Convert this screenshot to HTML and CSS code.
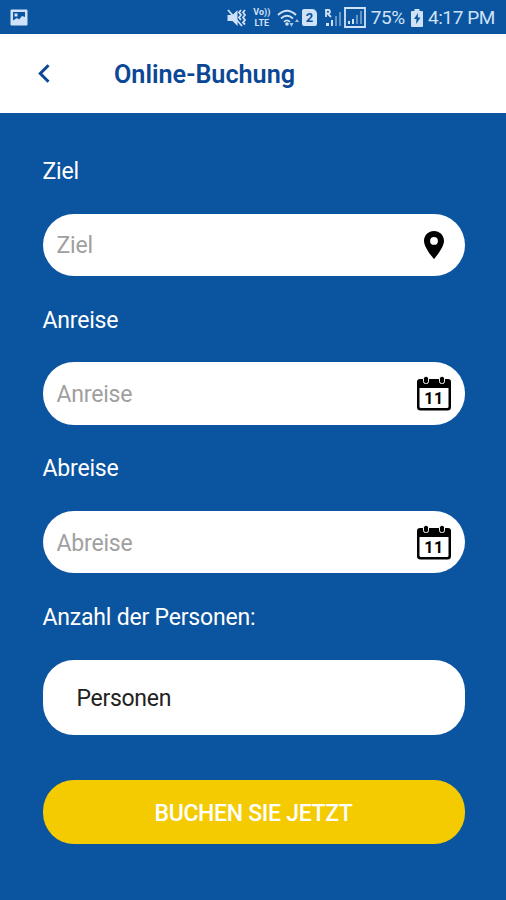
FILE: index.html
```
<!DOCTYPE html>
<html lang="de">
<head>
  <meta charset="UTF-8" />
  <meta name="viewport" content="width=device-width, initial-scale=1.0" />
  <title>Online-Buchung</title>
  <link rel="stylesheet" href="styles.css">
</head>
<body>

  <!-- Statusleiste -->
  <div class="status-bar">
    <svg class="icon-picture" width="18" height="17" viewBox="0 0 18 17" aria-hidden="true">
      <path fill-rule="evenodd" d="M1.500 0.500h15q1 0 1 1v14q0 1-1 1h-15q-1 0-1-1v-14q0-1 1-1zM3 3v8.500l4-2.500 2 1.500 3-3.500 3 1V3zM4.500 4.500h3v3h-3z"/>
    </svg>
    <div class="status-right">
      <svg class="icon-mute" width="20" height="18" viewBox="0 0 20 18" aria-hidden="true">
        <path d="M0.500 6h5l5-5v16l-5-5h-5z"/>
        <path class="line" d="M1 1l14 16M14 1l-2 2.500 2 2.500-2 2.500 2 2.500M18 1l-2 2.500 2 2.500-2 2.500 2 2.500-2 2.500 2 2"/>
      </svg>
      <div class="volte"><span>Vo))</span><span>LTE</span></div>
      <svg class="icon-wifi" width="22" height="18" viewBox="0 0 22 18" aria-hidden="true">
        <path class="line" d="M1 6q9-8.500 18 0M4 9.500q6-5.500 12 0M7 12.800q3-3 6 0"/>
        <circle cx="10" cy="15" r="1.800"/>
        <path d="M12.500 14h4l-2 4zM18 13l2-3 2 3z" opacity="0.8"/>
      </svg>
      <div class="sim">2</div>
      <svg class="icon-signal" width="18" height="20" viewBox="0 0 18 20" aria-hidden="true">
        <path class="line" d="M2 9V2h3q2 1.500 0 3.500H2M4 6l3 3"/>
        <path d="M2 15h3v3H2zM7 12h2v6H7z"/>
        <path d="M11 8h2v10h-2zM15 4h2v14h-2z" opacity="0.45"/>
      </svg>
      <svg class="icon-signal-box" width="22" height="21" viewBox="0 0 22 21" aria-hidden="true">
        <path class="line" d="M1 1h20v19H1z"/>
        <path d="M4 14h2v3H4zM8 12h2v5H8z"/>
        <path d="M12 8h2v9h-2zM16 4h2v13h-2z" opacity="0.45"/>
      </svg>
      <span class="percent">75%</span>
      <svg class="icon-battery" width="12" height="18" viewBox="0 0 12 18" aria-hidden="true">
        <path fill-rule="evenodd" d="M3.500 0h5v2H11q1 0 1 1v14q0 1-1 1H1q-1 0-1-1V3q0-1 1-1h2.500zM7 4L3 10h2.500L5 15l4.500-6.500H6.800z"/>
      </svg>
      <span class="time">4:17 PM</span>
    </div>
  </div>

  <!-- Kopfzeile -->
  <header class="header">
    <a class="back" href="#" aria-label="Zurück">
      <svg width="12" height="19" viewBox="0 0 12 19" aria-hidden="true">
        <path d="M10.500 1.200L2.300 9.500l8.200 8.300"/>
      </svg>
    </a>
    <h1>Online-Buchung</h1>
  </header>

  <!-- Buchungsformular -->
  <form class="booking">
    <label for="ziel">Ziel</label>
    <div class="field">
      <input type="text" id="ziel" placeholder="Ziel">
      <svg class="icon-pin" width="20" height="28" viewBox="0 0 20 28" aria-hidden="true">
        <path fill-rule="evenodd" d="M10 0C4.400 0 0 4.300 0 9.800 0 17 10 28 10 28s10-11 10-18.200C20 4.300 15.600 0 10 0zm0 6a3.900 3.900 0 1 1 0 7.800A3.900 3.900 0 0 1 10 6z"/>
      </svg>
    </div>

    <label for="anreise">Anreise</label>
    <div class="field">
      <input type="text" id="anreise" placeholder="Anreise">
      <svg class="icon-calendar" width="34" height="35" viewBox="0 0 34 35" aria-hidden="true">
        <path d="M3 3h28q3 0 3 3v25q0 3.500-3.500 3.500h-27Q0 34.500 0 31V6q0-3 3-3z"/>
        <path class="paper" d="M2.500 12h29v18.500q0 1.500-1.500 1.500H4q-1.500 0-1.500-1.500z"/>
        <rect class="ring" x="6.500" y="0.500" width="5" height="7" rx="2"/>
        <rect class="ring" x="22.500" y="0.500" width="5" height="7" rx="2"/>
        <text x="17" y="27.500">11</text>
      </svg>
    </div>

    <label for="abreise">Abreise</label>
    <div class="field">
      <input type="text" id="abreise" placeholder="Abreise">
      <svg class="icon-calendar" width="34" height="35" viewBox="0 0 34 35" aria-hidden="true">
        <path d="M3 3h28q3 0 3 3v25q0 3.500-3.500 3.500h-27Q0 34.500 0 31V6q0-3 3-3z"/>
        <path class="paper" d="M2.500 12h29v18.500q0 1.500-1.500 1.500H4q-1.500 0-1.500-1.500z"/>
        <rect class="ring" x="6.500" y="0.500" width="5" height="7" rx="2"/>
        <rect class="ring" x="22.500" y="0.500" width="5" height="7" rx="2"/>
        <text x="17" y="27.500">11</text>
      </svg>
    </div>

    <label for="personen">Anzahl der Personen:</label>
    <button type="button" class="persons" id="personen">Personen</button>

    <button type="submit" class="submit-btn">BUCHEN SIE JETZT</button>
  </form>

</body>
</html>
```
FILE: styles.css
```
* {
  box-sizing: border-box;
}

body {
  font-family: Roboto, "Liberation Sans", sans-serif;
  margin: 0;
  background: #0b549f;
  color: #fff;
  min-height: 100vh;
}

/* Statusleiste */
.status-bar {
  display: flex;
  justify-content: space-between;
  align-items: center;
  height: 34px;
  padding: 1px 11px 0 10px;
  color: #cfe2f7;
}

.status-bar svg {
  fill: #cfe2f7;
  flex: none;
}

.status-bar .line {
  fill: none;
  stroke: #cfe2f7;
  stroke-width: 1.8;
}

.status-right {
  display: flex;
  align-items: center;
  font-size: 19px;
  letter-spacing: -0.4px;
  line-height: 22px;
  white-space: nowrap;
}

.volte {
  display: flex;
  flex-direction: column;
  width: 18px;
  margin-left: 6px;
  font-size: 9px;
  font-weight: 700;
  letter-spacing: 0;
  line-height: 11px;
  text-align: center;
}

.icon-wifi {
  margin-left: 6px;
}

.sim {
  width: 15px;
  height: 17px;
  margin-left: 3px;
  border-radius: 2px;
  border-top-right-radius: 5px;
  background: #cfe2f7;
  color: #0b549f;
  font-size: 13px;
  font-weight: 700;
  line-height: 17px;
  text-align: center;
}

.icon-signal {
  margin-left: 7px;
}

.icon-signal-box {
  margin-left: 2px;
}

.percent {
  margin-left: 5px;
}

.icon-battery {
  margin-left: 6px;
}

.time {
  margin-left: 5px;
}

/* Kopfzeile */
.header {
  display: flex;
  align-items: center;
  height: 79px;
  padding: 2px 38px 0;
  background: #fff;
  color: #0b4795;
}

.back {
  display: flex;
  width: 76px;
  padding-bottom: 3px;
}

.back svg {
  fill: none;
  stroke: #0b4795;
  stroke-width: 3;
}

.header h1 {
  margin: 0;
  font-size: 25.200px;
  font-weight: 600;
  line-height: 30px;
}

/* Formular */
.booking {
  display: flex;
  flex-direction: column;
  padding: 44px 41.500px 0 42.500px;
}

.booking label {
  height: 30px;
  margin-bottom: 26.500px;
  font-size: 23px;
  letter-spacing: -0.2px;
  line-height: 30px;
}

.field {
  display: flex;
  align-items: center;
  height: 62.500px;
  margin-bottom: 29.700px;
  padding: 0 14px;
  border-radius: 31px;
  background: #fff;
}

.field input {
  flex: 1;
  min-width: 0;
  padding: 2px 0 0;
  border: none;
  outline: none;
  background: transparent;
  font-family: inherit;
  font-size: 23px;
  letter-spacing: -0.2px;
  color: #222;
}

.field input::placeholder {
  color: #a0a0a0;
  opacity: 1;
}

.icon-pin {
  margin-right: 7px;
  fill: #000;
}

.icon-calendar .paper {
  fill: #fff;
}

.icon-calendar .ring {
  fill: #000;
  stroke: #fff;
  stroke-width: 1;
}

.icon-calendar text {
  font-size: 16px;
  font-weight: 700;
  letter-spacing: 0.5px;
  text-anchor: middle;
}

.persons,
.submit-btn {
  border: none;
  border-radius: 31px;
  font-family: inherit;
  font-size: 23px;
  letter-spacing: -0.3px;
  cursor: pointer;
}

.persons {
  height: 75.500px;
  padding: 2px 34px 0;
  background: #fff;
  color: #222;
  text-align: left;
}

.submit-btn {
  height: 64.500px;
  margin-top: 44.500px;
  padding: 3px 0 0;
  background: #f4cb00;
  color: #fff;
  font-weight: 500;
}
```
